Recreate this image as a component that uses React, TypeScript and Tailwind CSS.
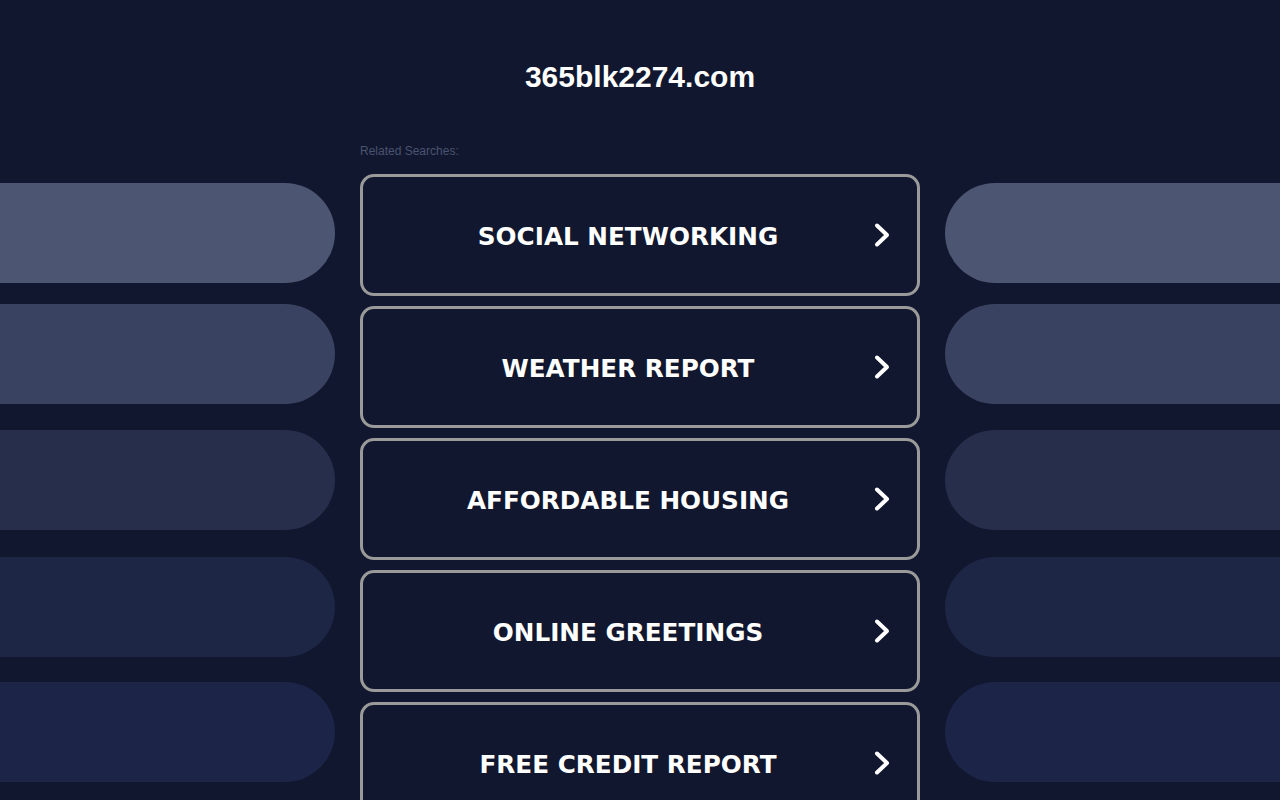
import React from "react";

const leftPills = [
  { color: "bg-[#4c5571]", mt: "mt-[183px]" },
  { color: "bg-[#3a4261]", mt: "mt-[21px]" },
  { color: "bg-[#262e4b]", mt: "mt-[26px]" },
  { color: "bg-[#1e2646]", mt: "mt-[27px]" },
  { color: "bg-[#1c2547]", mt: "mt-[25px]" },
];

const items = [
  "SOCIAL NETWORKING",
  "WEATHER REPORT",
  "AFFORDABLE HOUSING",
  "ONLINE GREETINGS",
  "FREE CREDIT REPORT",
];

function Chevron() {
  return (
    <svg width="16" height="25" viewBox="0 0 16 25" fill="none" className="block">
      <polyline
        points="3,3 13,12.5 3,22"
        stroke="white"
        strokeWidth="4"
        strokeLinecap="round"
        strokeLinejoin="round"
      />
    </svg>
  );
}

export default function App() {
  return (
    <div className="min-h-screen w-full overflow-hidden bg-[#11172e] font-['Liberation_Sans',Arial,sans-serif]">
      <div className="grid grid-cols-[335px_560px_335px] gap-x-[25px] pb-[40px]">
        <div className="flex flex-col">
          {leftPills.map((p, i) => (
            <div key={i} className={`${p.mt} h-[100px] w-full rounded-r-full ${p.color}`} />
          ))}
        </div>
        <div className="flex flex-col">
          <h1 className="pt-[60px] text-center text-[30px] font-bold leading-[34px] text-white">
            365blk2274.com
          </h1>
          <div className="mt-[50px] text-[12px] leading-[14px] text-[#4a5470]">Related Searches:</div>
          <div className="mt-[16px] flex flex-col gap-[10px]">
            {items.map((t) => (
              <a
                key={t}
                href="#"
                className="relative flex h-[122px] items-center justify-center rounded-[14px] border-[3px] border-[#9a9a9a] pr-[24px]"
              >
                <span className="mt-[4px] font-['DejaVu_Sans',Verdana,sans-serif] text-[24.7px] font-bold text-white">
                  {t}
                </span>
                <span className="absolute right-[27px] top-1/2 -translate-y-1/2">
                  <Chevron />
                </span>
              </a>
            ))}
          </div>
        </div>
        <div className="flex flex-col">
          {leftPills.map((p, i) => (
            <div key={i} className={`${p.mt} h-[100px] w-full rounded-l-full ${p.color}`} />
          ))}
        </div>
      </div>
    </div>
  );
}
